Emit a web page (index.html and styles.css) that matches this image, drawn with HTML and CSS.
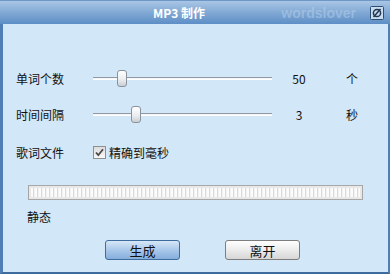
FILE: index.html
```html
<!DOCTYPE html>
<html lang="zh">
<head>
    <meta charset="UTF-8">
    <title>MP3 制作</title>
    <link rel="stylesheet" href="styles.css">
</head>
<body>
    <div class="window">
        <div class="titlebar">
            <span class="title">MP3 制作</span>
            <span class="brand">wordslover</span>
            <span class="title-icon">
                <svg width="14" height="14" viewBox="0 0 14 14">
                    <rect x="0.5" y="0.5" width="13" height="13" rx="1" fill="#c9dcef" stroke="#2d4d73"/>
                    <circle cx="7" cy="7" r="3.6" fill="none" stroke="#1f3550" stroke-width="1.5"/>
                    <line x1="3.5" y1="11" x2="10.5" y2="3" stroke="#1f3550" stroke-width="1.5"/>
                </svg>
            </span>
        </div>

        <div class="content">
            <div class="row row-count">
                <span class="label">单词个数</span>
                <div class="slider">
                    <div class="track"></div>
                    <div class="thumb" style="left: 24px"></div>
                </div>
                <span class="value">50</span>
                <span class="unit">个</span>
            </div>

            <div class="row row-time">
                <span class="label">时间间隔</span>
                <div class="slider">
                    <div class="track"></div>
                    <div class="thumb" style="left: 38px"></div>
                </div>
                <span class="value">3</span>
                <span class="unit">秒</span>
            </div>

            <div class="row row-lyric">
                <span class="label">歌词文件</span>
                <label class="check">
                    <span class="box">
                        <svg width="11" height="11" viewBox="0 0 11 11">
                            <path d="M2 5.5 L4.3 8.2 L9 2.2" fill="none" stroke="#4a4a4a" stroke-width="1.8"/>
                        </svg>
                    </span>
                    精确到毫秒
                </label>
            </div>

            <div class="progress"><div class="progress-inner"></div></div>

            <div class="status">静态</div>

            <div class="buttons">
                <button class="btn btn-primary">生成</button>
                <button class="btn">离开</button>
            </div>
        </div>
    </div>
</body>
</html>
```

FILE: styles.css
```css
body {
    margin: 0;
    font-family: "Noto Sans CJK SC", "DejaVu Sans", sans-serif;
    font-size: 12px;
    color: #111;
    background-color: #d2e7f7;
}
.window {
    width: 390px;
    height: 274px;
    box-sizing: border-box;
    border-left: 3px solid #4f7fb5;
    border-right: 2px solid #4f7fb5;
    border-bottom: 2px solid #3f6b9c;
    background-color: #d2e7f7;
}
.titlebar {
    height: 24px;
    display: flex;
    align-items: center;
    background: linear-gradient(#a9c6e6, #7ea6d3 55%, #5d8ec6);
    border-top: 1px solid #6f97c6;
    box-sizing: border-box;
    margin-left: -3px;
    margin-right: -2px;
    padding-right: 6px;
    white-space: nowrap;
}
.title {
    margin-left: 153px;
    flex-shrink: 0;
    color: #fff;
    font-weight: bold;
    font-size: 12px;
    font-family: "Noto Sans CJK SC", "Liberation Sans", sans-serif;
}
.brand {
    margin-left: auto;
    margin-right: 14px;
    font-family: "Liberation Sans", sans-serif;
    font-weight: bold;
    font-size: 14px;
    color: rgba(190, 215, 240, 0.45);
}
.title-icon {
    display: flex;
    flex-shrink: 0;
}
.content {
    height: 248px;
    box-sizing: border-box;
    padding: 42px 0 0 13px;
}
.row {
    display: flex;
    align-items: center;
    height: 24px;
}
.row-time {
    margin-top: 12px;
}
.row-lyric {
    margin-top: 14px;
}
.label {
    width: 77px;
}
.slider {
    position: relative;
    width: 179px;
    height: 24px;
}
.track {
    position: absolute;
    left: 0;
    right: 0;
    top: 11px;
    height: 1px;
    border-top: 1px solid #8f9aa6;
    border-bottom: 1px solid #fff;
    background: #f4f6f8;
}
.thumb {
    position: absolute;
    top: 4px;
    width: 8px;
    height: 15px;
    border: 1px solid #8a929c;
    border-radius: 3px;
    background: linear-gradient(#ffffff, #e9ecef 60%, #c9ced4);
}
.value {
    width: 54px;
    text-align: center;
}
.unit {
    margin-left: 20px;
}
.check {
    display: flex;
    align-items: center;
    gap: 3px;
}
.box {
    width: 11px;
    height: 11px;
    border: 1px solid #8e8f8f;
    background: linear-gradient(#dcdcdc, #f8f8f8);
    display: flex;
}
.progress {
    margin: 21px 0 0 12px;
    width: 335px;
    height: 15px;
    box-sizing: border-box;
    border: 1px solid #a6a6a6;
    background: #e8e8e8;
    padding: 2px;
}
.progress-inner {
    height: 100%;
    background: repeating-linear-gradient(90deg, #fbfbfb 0 2px, #d9d9d9 2px 3px, #f2f2f2 3px 4px);
}
.status {
    margin: 9px 0 0 11px;
    height: 16px;
    line-height: 16px;
}
.buttons {
    display: flex;
    gap: 45px;
    margin: 15px 0 0 89px;
}
.btn {
    width: 75px;
    height: 20px;
    padding: 0;
    font-family: "Noto Sans CJK SC", sans-serif;
    font-size: 13px;
    color: #111;
    border: 1px solid #7d7d7d;
    border-radius: 3px;
    background: linear-gradient(#fefefe, #ececec 50%, #d6d6d6);
}
.btn-primary {
    border-color: #3f6c9f;
    background: linear-gradient(#d7e7f8, #a9c8ea 50%, #86addb);
}
```
